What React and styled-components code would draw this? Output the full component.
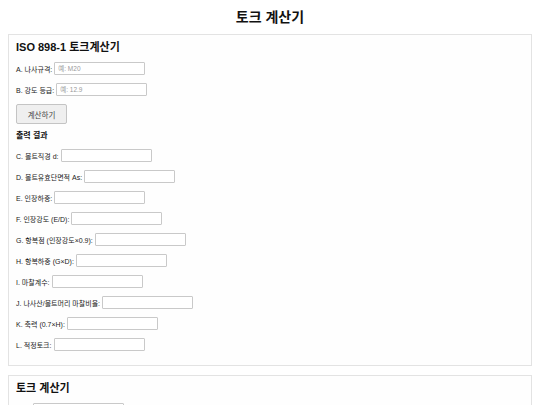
import React from 'react';
import styled, { createGlobalStyle } from 'styled-components';

const GlobalStyle = createGlobalStyle`
  html, body {
    margin: 0;
    padding: 0;
    background: #ffffff;
    font-family: "Liberation Sans", Arial, "Noto Sans CJK KR", sans-serif;
    color: #111;
  }
`;

const Page = styled.div`
  width: 540px;
  height: 405px;
  overflow: hidden;
`;

const Title = styled.h1`
  margin: 9px 0 0;
  height: 16px;
  line-height: 16px;
  font-size: 14px;
  font-weight: 700;
  text-align: center;
`;

const Card = styled.section`
  margin: ${(p) => p.$top}px 8px 0;
  padding: 0 8px 14px 7px;
  border: 1px solid #e3e3e3;
  background: #fefefe;
`;

const CardTitle = styled.h2`
  margin: 5px 0 0;
  height: 14px;
  line-height: 14px;
  font-size: 11px;
  font-weight: 700;
`;

const Row = styled.div`
  display: flex;
  align-items: center;
  margin-top: 8px;
  height: 13px;
`;

const Label = styled.label`
  font-size: 7px;
  color: #1a1a1a;
  white-space: nowrap;
  ${(p) => (p.$w ? `width: ${p.$w}px;` : '')}
`;

const Input = styled.input`
  box-sizing: border-box;
  width: 91px;
  height: 13px;
  margin: 0 0 0 2px;
  padding: 0 3px;
  border: 1px solid #c9c9c9;
  border-radius: 1px;
  background: #fff;
  font-family: inherit;
  font-size: 6.5px;
  outline: none;

  &::placeholder {
    color: #9a9a9a;
  }
`;

const Button = styled.button`
  box-sizing: border-box;
  margin-top: 8px;
  width: 51px;
  height: 20px;
  padding: 0;
  border: 1px solid #c4c4c4;
  border-radius: 2px;
  background: #efefef;
  color: #444;
  font-family: inherit;
  font-size: 7.5px;
`;

const Section = styled.h3`
  margin: 7px 0 0;
  height: 10px;
  line-height: 10px;
  font-size: 8px;
  font-weight: 700;
`;

const outputs = [
  'C. 볼트직경 d:',
  'D. 볼트유효단면적 As:',
  'E. 인장하중:',
  'F. 인장강도 (E/D):',
  'G. 항복점 (인장강도×0.9):',
  'H. 항복하중 (G×D):',
  'I. 마찰계수:',
  'J. 나사산/볼트머리 마찰비율:',
  'K. 축력 (0.7×H):',
  'L. 적정토크:',
];

export default function App() {
  return (
    <Page>
      <GlobalStyle />
      <Title>토크 계산기</Title>
      <Card $top={9}>
        <CardTitle>ISO 898-1 토크계산기</CardTitle>
        <Row>
          <Label>A. 나사규격:</Label>
          <Input placeholder="예: M20" />
        </Row>
        <Row>
          <Label>B. 강도 등급:</Label>
          <Input placeholder="예: 12.9" />
        </Row>
        <Button>계산하기</Button>
        <Section>출력 결과</Section>
        {outputs.map((text) => (
          <Row key={text}>
            <Label>{text}</Label>
            <Input readOnly />
          </Row>
        ))}
      </Card>
      <Card $top={9}>
        <CardTitle>토크 계산기</CardTitle>
        <Row>
          <Label $w={15} />
          <Input />
        </Row>
      </Card>
    </Page>
  );
}
